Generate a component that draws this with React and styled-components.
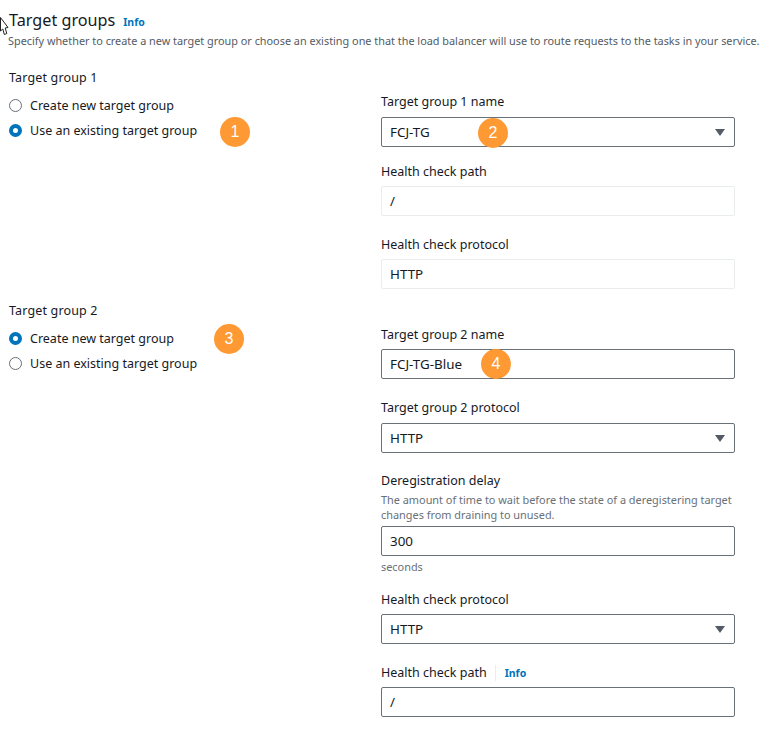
import React from "react";
import styled, { createGlobalStyle } from "styled-components";

const GlobalStyle = createGlobalStyle`
  html, body {
    margin: 0;
    padding: 0;
    background: #fff;
    overflow: hidden;
  }
  body {
    font-family: "Noto Sans", "Open Sans", sans-serif;
    color: #16191f;
  }
`;

const Page = styled.div`
  position: relative;
  width: 770px;
  height: 729px;
  padding: 8px 0 0 8px;
  box-sizing: border-box;
`;

const Cursor = styled.svg`
  position: absolute;
  left: 0;
  top: 17px;
`;

const HeadingRow = styled.div`
  display: flex;
  align-items: baseline;
  gap: 8px;
  height: 24px;
  padding-left: 1px;
`;

const Title = styled.h2`
  margin: 0;
  font-size: 16.2px;
  line-height: 24px;
  font-weight: 400;
  color: #16191f;
`;

const InfoLink = styled.a`
  font-size: 10.5px;
  font-weight: 700;
  color: #0073bb;
`;

const Description = styled.p`
  margin: 1px 0 0;
  font-size: 10.87px;
  line-height: 16px;
  white-space: nowrap;
  color: #545b64;
`;

const Section = styled.section`
  display: grid;
  grid-template-columns: 373px 354px;
  margin-top: ${(p) => p.$top}px;
`;

const GroupTitle = styled.div`
  padding-left: 1px;
  font-size: 12.5px;
  letter-spacing: 0.15px;
  line-height: 20px;
`;

const RadioList = styled.div`
  display: flex;
  flex-direction: column;
  gap: 5px;
  margin-top: ${(p) => p.$top}px;
`;

const RadioRow = styled.label`
  display: flex;
  align-items: center;
  gap: 8px;
  height: 20px;
  padding-left: 1px;
  font-size: 12.5px;
`;

const RadioDot = styled.span`
  width: 13px;
  height: 13px;
  border-radius: 50%;
  box-sizing: border-box;
  flex: none;
  background: #fff;
  border: ${(p) => (p.$on ? "4px solid #0073bb" : "1px solid #687078")};
`;

const Column = styled.div`
  padding-top: ${(p) => p.$top}px;
`;

const Field = styled.div`
  margin-top: ${(p) => p.$top || 0}px;
`;

const Label = styled.div`
  display: flex;
  align-items: center;
  font-size: 12.5px;
  line-height: 20px;
  height: 20px;
  margin-bottom: ${(p) => p.$gap ?? 5}px;
`;

const Hint = styled.div`
  font-size: 10.9px;
  line-height: 15px;
  color: #687078;
`;

const HintBlock = styled(Hint)`
  margin-bottom: 4px;
`;

const Control = styled.div`
  display: flex;
  align-items: center;
  justify-content: space-between;
  box-sizing: border-box;
  width: 354px;
  height: 30px;
  padding: 0 9px 0 8px;
  font-size: 13.4px;
  background: #fff;
  border-radius: 2px;
  border: 1px solid ${(p) => (p.$readOnly ? "#eaeded" : "#687078")};
`;

const Caret = styled.span`
  width: 0;
  height: 0;
  border-left: 5px solid transparent;
  border-right: 5px solid transparent;
  border-top: 7px solid #545b64;
`;

const LabelInfo = styled(InfoLink)`
  margin-left: 8px;
  padding-left: 9px;
  border-left: 1px solid #eaeded;
  line-height: 16px;
`;

const Suffix = styled(Hint)`
  margin-top: 3px;
`;

const Badge = styled.span`
  position: absolute;
  left: ${(p) => p.$x}px;
  top: ${(p) => p.$y}px;
  display: flex;
  align-items: center;
  justify-content: center;
  width: 30px;
  height: 30px;
  border-radius: 50%;
  background: #ff9933;
  color: #fff;
  font-family: "Liberation Sans", Arial, sans-serif;
  font-size: 16px;
`;

const Radio = ({ on, children }) => (
  <RadioRow>
    <RadioDot $on={on} />
    {children}
  </RadioRow>
);

const Select = ({ children }) => (
  <Control>
    {children}
    <Caret />
  </Control>
);

export default function App() {
  return (
    <Page>
      <GlobalStyle />
      <Cursor width="9" height="19" viewBox="0 0 9 19">
        <path d="M0.5 0.5 L0.5 14 L2.8 12 L4.3 17.5 L6.8 16.5 L5.2 11 L8 10.5 Z" fill="#fff" stroke="#222" strokeWidth="1" />
      </Cursor>

      <HeadingRow>
        <Title>Target groups</Title>
        <InfoLink>Info</InfoLink>
      </HeadingRow>
      <Description>
        Specify whether to create a new target group or choose an existing one that the load balancer will use to route requests to the tasks in your service.
      </Description>

      <Section $top={19}>
        <div>
          <GroupTitle>Target group 1</GroupTitle>
          <RadioList $top={7}>
            <Radio>Create new target group</Radio>
            <Radio on>Use an existing target group</Radio>
          </RadioList>
        </div>
        <Column $top={24}>
          <Field>
            <Label>Target group 1 name</Label>
            <Select>FCJ-TG</Select>
          </Field>
          <Field $top={15}>
            <Label $gap={4}>Health check path</Label>
            <Control $readOnly>/</Control>
          </Field>
          <Field $top={19}>
            <Label $gap={4}>Health check protocol</Label>
            <Control $readOnly>HTTP</Control>
          </Field>
        </Column>
      </Section>

      <Section $top={12}>
        <div>
          <GroupTitle>Target group 2</GroupTitle>
          <RadioList $top={7}>
            <Radio on>Create new target group</Radio>
            <Radio>Use an existing target group</Radio>
          </RadioList>
        </div>
        <Column $top={24}>
          <Field>
            <Label $gap={4}>Target group 2 name</Label>
            <Control>FCJ-TG-Blue</Control>
          </Field>
          <Field $top={19}>
            <Label>Target group 2 protocol</Label>
            <Select>HTTP</Select>
          </Field>
          <Field $top={18}>
            <Label $gap={1}>Deregistration delay</Label>
            <HintBlock>
              The amount of time to wait before the state of a deregistering target changes from draining to unused.
            </HintBlock>
            <Control>300</Control>
            <Suffix>seconds</Suffix>
          </Field>
          <Field $top={16}>
            <Label $gap={4}>Health check protocol</Label>
            <Select>HTTP</Select>
          </Field>
          <Field $top={19}>
            <Label $gap={4}>
              Health check path
              <LabelInfo>Info</LabelInfo>
            </Label>
            <Control>/</Control>
          </Field>
        </Column>
      </Section>

      <Badge $x={220} $y={117}>1</Badge>
      <Badge $x={478} $y={118}>2</Badge>
      <Badge $x={214} $y={324}>3</Badge>
      <Badge $x={481} $y={349}>4</Badge>
    </Page>
  );
}
